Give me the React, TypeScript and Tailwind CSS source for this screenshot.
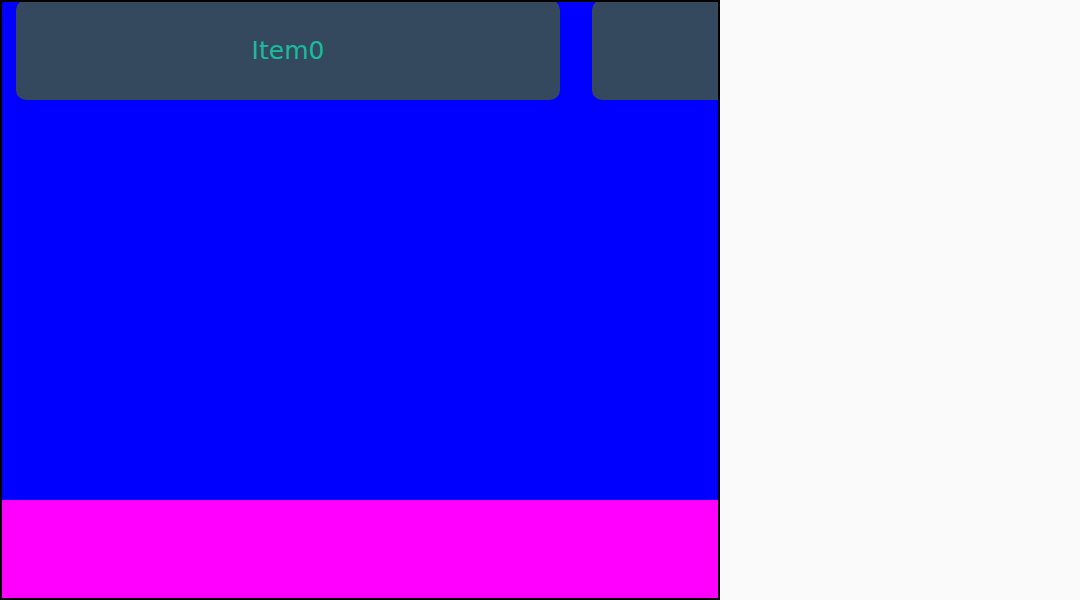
const items = ["Item0", "Item1", "Item2"];

const App = () => {
  return (
    <div className="w-[1080px] h-[600px] bg-[#fafafa]">
      <div className="w-[720px] h-[600px] border-2 border-black flex flex-col overflow-hidden">
        <div className="h-[498px] bg-[#0000ff] overflow-hidden">
          <div className="flex -ml-[2px] -mt-[2px]">
            {items.map((item) => (
              <div key={item} className="shrink-0 w-[576px] px-4">
                <div className="h-[100px] pt-[2px] rounded-[10px] bg-[#34495e] flex items-center justify-center text-[25px] text-[#1abc9c] font-['DejaVu_Sans',sans-serif]">
                  {item}
                </div>
              </div>
            ))}
          </div>
        </div>
        <div className="h-[98px] bg-[#ff00ff]"></div>
      </div>
    </div>
  );
};

export default App;
